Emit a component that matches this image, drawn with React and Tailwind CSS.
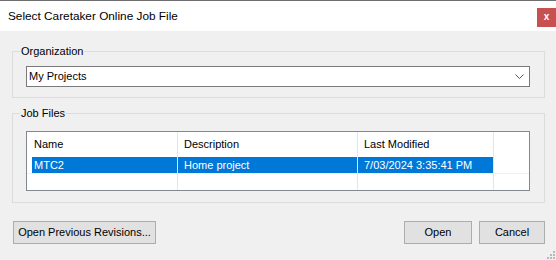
import React from "react";

const font = { fontFamily: '"Liberation Sans", Arial, sans-serif' };

function Btn({ children, className }) {
  return (
    <div
      className={
        "h-[23px] flex items-center justify-center bg-[#e1e1e1] border border-[#adadad] text-[11px] text-black " +
        className
      }
    >
      {children}
    </div>
  );
}

function GroupBox({ label, className, children }) {
  return (
    <div className={"relative border border-[#dcdcdc] mx-[12px] w-[533px] " + className}>
      <div className="absolute -top-[8px] left-[7px] bg-[#f0f0f0] px-[1px] text-[11px] leading-[14px] text-black">
        {label}
      </div>
      {children}
    </div>
  );
}

export default function App() {
  return (
    <div
      className="relative w-[556px] h-[260px] bg-[#f0f0f0] overflow-hidden text-black"
      style={font}
    >
      {/* Title bar */}
      <div className="h-[31px] bg-white border-t border-[#6e6e6e] flex items-start">
        <div className="pl-[8px] pt-[8px] text-[11.8px] leading-[15px] text-black">
          Select Caretaker Online Job File
        </div>
        <div className="ml-auto mt-[7px] w-[19px] h-[19px] bg-[#c75050] flex items-center justify-center text-white text-[10px] font-bold leading-none pb-[2px]">
          x
        </div>
      </div>

      {/* Organization */}
      <GroupBox label="Organization" className="mt-[20px] h-[47px] pt-[14px] pl-[13px]">
        <div className="w-[504px] h-[21px] bg-white border border-[#7a7a7a] flex items-center pl-[2px] text-[11px]">
          <span>My Projects</span>
          <svg className="ml-auto mr-[5px]" width="9" height="5" viewBox="0 0 9 5">
            <path d="M0.5 0.5 L4.5 4.5 L8.5 0.5" fill="none" stroke="#555" strokeWidth="1" />
          </svg>
        </div>
      </GroupBox>

      {/* Job Files */}
      <GroupBox label="Job Files" className="mt-[15px] h-[90px] pt-[17px] pl-[13px]">
        <div className="w-[504px] h-[60px] bg-white border border-[#828790] flex text-[11px]">
          {/* Name column */}
          <div className="w-[150px] flex flex-col">
            <div className="h-[25px] flex items-center pl-[7px]">Name</div>
            <div className="h-[16px] flex">
              <div className="w-[5px] bg-white" />
              <div className="flex-1 bg-[#0078d7] text-white flex items-center pl-[2px]">MTC2</div>
            </div>
            <div className="h-[1px] bg-[#f0f0f0]" />
          </div>
          <div className="w-[1px] bg-[#e5e5e5]" />
          {/* Description column */}
          <div className="w-[179px] flex flex-col">
            <div className="h-[25px] flex items-center pl-[6px]">Description</div>
            <div className="h-[16px] bg-[#0078d7] text-white flex items-center pl-[6px]">Home project</div>
            <div className="h-[1px] bg-[#f0f0f0]" />
          </div>
          <div className="w-[1px] bg-[#e5e5e5]" />
          {/* Last Modified */}
          <div className="w-[135px] flex flex-col">
            <div className="h-[25px] flex items-center pl-[6px]">Last Modified</div>
            <div className="h-[16px] bg-[#0078d7] text-white flex items-center pl-[6px]">7/03/2024 3:35:41 PM</div>
            <div className="h-[1px] bg-[#f0f0f0]" />
          </div>
          <div className="w-[1px] bg-[#e5e5e5]" />
          <div className="flex-1 flex flex-col">
            <div className="h-[41px]" />
            <div className="h-[1px] bg-[#f0f0f0]" />
          </div>
        </div>
      </GroupBox>

      {/* Buttons */}
      <div className="mt-[18px] flex pl-[13px] pr-[11px]">
        <Btn className="w-[143px]">Open Previous Revisions...</Btn>
        <Btn className="ml-auto w-[68px]">Open</Btn>
        <Btn className="ml-[7px] w-[66px]">Cancel</Btn>
      </div>

      {/* Size grip */}
      <svg className="absolute right-[1px] bottom-[1px]" width="8" height="8" viewBox="0 0 8 8">
        <rect x="6" y="0" width="2" height="2" fill="#b8b8b8" />
        <rect x="3" y="3" width="2" height="2" fill="#b8b8b8" />
        <rect x="6" y="3" width="2" height="2" fill="#b8b8b8" />
        <rect x="0" y="6" width="2" height="2" fill="#b8b8b8" />
        <rect x="3" y="6" width="2" height="2" fill="#b8b8b8" />
        <rect x="6" y="6" width="2" height="2" fill="#b8b8b8" />
      </svg>
    </div>
  );
}
